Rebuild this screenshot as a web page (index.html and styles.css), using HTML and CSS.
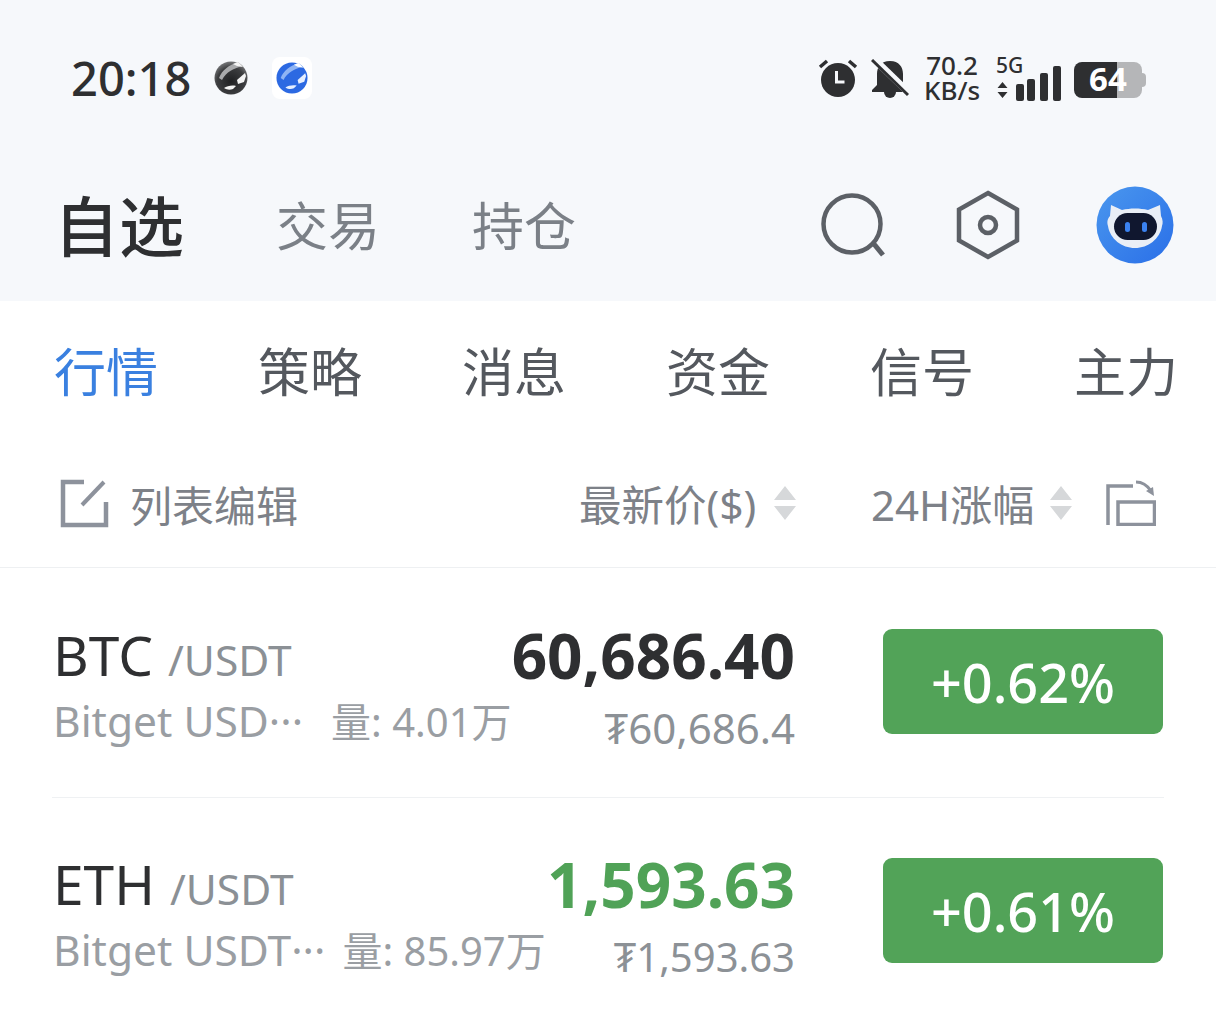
FILE: index.html
```html
<!DOCTYPE html>
<html lang="zh-CN">
<head>
<meta charset="utf-8">
<title>自选</title>
<link rel="stylesheet" href="styles.css">
</head>
<body>
<header class="top">
  <div class="status">
    <div class="status-left">
      <span class="clock">20:18</span>
      <svg class="app-dark" viewBox="0 0 34 34"><defs><radialGradient id="sphd" cx="0.5" cy="0.6" r="0.6"><stop offset="0" stop-color="#1f2022"/><stop offset="0.7" stop-color="#3c3d3f"/><stop offset="1" stop-color="#77787a"/></radialGradient></defs><circle cx="17" cy="17" r="16.500" fill="url(#sphd)"/><path d="M5 17C8 9 15 4 24 1l5 4C20 7 12 11 8 19z" fill="#a9aaac"/><path d="M19 3l5-2 5 5-6-1z" fill="#f4f4f4"/><path d="M10 27c3-2 8-3 12-2l-3 3c-3 1-6 1-9-1z" fill="#f4f4f4"/><path d="M23 19l8-7 1 3-2 6-6 2z" fill="#f4f4f4"/></svg>
      <span class="app-tile"><svg class="app-blue" viewBox="0 0 34 34"><circle cx="17" cy="17" r="16.500" fill="#2c69e2"/><path d="M5 17C8 9 15 4 24 1l5 4C20 7 12 11 8 19z" fill="#8fb4f4"/><path d="M19 3l5-2 5 5-6-1z" fill="#fff"/><path d="M10 27c3-2 8-3 12-2l-3 3c-3 1-6 1-9-1z" fill="#e6efff"/><path d="M23 19l8-7 1 3-2 6-6 2z" fill="#e6efff"/></svg></span>
    </div>
    <div class="status-right">
      <svg class="ic-alarm" viewBox="0 0 40 40"><circle cx="20" cy="22" r="17" fill="#2e2f31"/><path d="M18.500 13v11h8" stroke="#f6f8fb" stroke-width="3" fill="none"/><path d="M2 9l7-6M38 9l-7-6" stroke="#2e2f31" stroke-width="3.500"/></svg>
      <svg class="ic-bell" viewBox="0 0 38 40"><path d="M19 2c9 0 13 6 13 13v11l5 5v2H1v-2l5-5V15C6 8 10 2 19 2z" fill="#2e2f31"/><path d="M13 33a6 6 0 0 0 12 0z" fill="#2e2f31"/><path d="M2 -1l36 35" stroke="#f6f8fb" stroke-width="7"/><path d="M1 1l36 35" stroke="#2e2f31" stroke-width="3"/></svg>
      <div class="speed">70.2<br>KB/s</div>
      <div class="net">
        <span class="fiveg">5G</span>
        <svg class="ic-arrows" viewBox="0 0 12 18"><path d="M6 1l5 6H1zM6 17l5-6H1z" fill="#2e2f31"/></svg>
      </div>
      <svg class="ic-signal" viewBox="0 0 45 35"><rect x="0" y="18" width="8" height="17" rx="2"/><rect x="11" y="13" width="8" height="22" rx="2"/><rect x="24" y="7" width="8" height="28" rx="2"/><rect x="37" y="0" width="8" height="35" rx="2"/></svg>
      <div class="battery"><span class="battery-num">64</span><span class="battery-cap"></span></div>
    </div>
  </div>
  <nav class="mainnav">
    <span class="nav-active">自选</span>
    <span class="nav-item">交易</span>
    <span class="nav-item">持仓</span>
    <div class="nav-icons">
      <svg class="ic-search" viewBox="0 0 64 64"><circle cx="31" cy="31" r="28.500" fill="none" stroke="#5c6066" stroke-width="4.500"/><path d="M53 51l9 11" stroke="#5c6066" stroke-width="5" fill="none"/></svg>
      <svg class="ic-hex" viewBox="0 0 64 70"><path d="M32 3l29 16.500v31L32 67 3 50.500v-31z" fill="none" stroke="#5c6066" stroke-width="4.500"/><circle cx="32" cy="35" r="8" fill="none" stroke="#5c6066" stroke-width="4.500"/></svg>
      <svg class="ic-bot" viewBox="0 0 78 78"><defs><linearGradient id="botbg" x1="0" y1="0" x2="1" y2="1"><stop offset="0" stop-color="#4a97ee"/><stop offset="1" stop-color="#2a6fe8"/></linearGradient></defs><circle cx="39" cy="39" r="38.500" fill="url(#botbg)"/><path d="M15 19l11 5c8-2 18-2 26 0l12-5 1 11c2 4 2 7 1 10-2 13-14 22-27 22S14 53 12 40c-1-3-1-7 2-10z" fill="#e9eef6"/><rect x="18" y="27" width="43" height="27" rx="13.500" fill="#10172f"/><rect x="29" y="36" width="5" height="10" rx="2.500" fill="#3b82f0"/><rect x="46" y="36" width="5" height="10" rx="2.500" fill="#3b82f0"/></svg>
    </div>
  </nav>
</header>
<main class="panel">
  <div class="tabs">
    <span class="tab tab-active">行情</span>
    <span class="tab">策略</span>
    <span class="tab">消息</span>
    <span class="tab">资金</span>
    <span class="tab">信号</span>
    <span class="tab">主力</span>
  </div>
  <div class="listhead">
    <div class="edit">
      <svg class="ic-edit" viewBox="0 0 50 50"><path d="M24 4H3v43h43V24" fill="none" stroke="#8d929c" stroke-width="4.500"/><path d="M22 27L44 4" stroke="#8d929c" stroke-width="4"/></svg>
      <span>列表编辑</span>
    </div>
    <div class="sort sort-price">
      <span class="sort-label">最新价($)</span>
      <svg class="ic-sort" viewBox="0 0 24 34"><path d="M12 0l11 14H1zM12 34l11-14H1z" fill="#d6d8da"/></svg>
    </div>
    <div class="sort sort-change">
      <span class="sort-label">24H涨幅</span>
      <svg class="ic-sort" viewBox="0 0 24 34"><path d="M12 0l11 14H1zM12 34l11-14H1z" fill="#d6d8da"/></svg>
    </div>
    <svg class="ic-rotate" viewBox="0 0 50 46"><path d="M27 6H2v39" fill="none" stroke="#8d929c" stroke-width="3.500"/><rect x="12" y="22" width="36.500" height="22.500" fill="none" stroke="#8d929c" stroke-width="3.500"/><path d="M30 2c6 0 11 3 15 9" fill="none" stroke="#8d929c" stroke-width="3"/><path d="M40 11l7-4 1 9z" fill="#8d929c"/></svg>
  </div>
  <article class="coin">
    <div class="coin-main">
      <div class="pair"><span class="sym">BTC</span><span class="quote">/USDT</span></div>
      <div class="meta"><span class="meta-name">Bitget USD···</span><span class="meta-vol">量: 4.01万</span></div>
    </div>
    <div class="coin-price">
      <span class="price">60,686.40</span>
      <span class="fiat fiat-wide">₮60,686.4</span>
    </div>
    <div class="change">+0.62%</div>
  </article>
  <hr class="divider">
  <article class="coin">
    <div class="coin-main">
      <div class="pair"><span class="sym">ETH</span><span class="quote">/USDT</span></div>
      <div class="meta"><span class="meta-name meta-name-tight">Bitget USDT···</span><span class="meta-vol">量: 85.97万</span></div>
    </div>
    <div class="coin-price">
      <span class="price price-up">1,593.63</span>
      <span class="fiat">₮1,593.63</span>
    </div>
    <div class="change">+0.61%</div>
  </article>
</main>
</body>
</html>
```
FILE: styles.css
```css
* { box-sizing: border-box; }
html, body { margin: 0; padding: 0; }
body {
  width: 1216px;
  height: 1025px;
  overflow: hidden;
  background: #fff;
  font-family: "Noto Sans", "Noto Sans CJK SC", sans-serif;
  color: #2e2f31;
}
svg { display: block; flex: none; }

.top { height: 301px; background: #f6f8fb; padding-top: 50px; }
.status { height: 56px; display: flex; justify-content: space-between; align-items: center; padding: 0 70px 0 71px; }
.status-left { display: flex; align-items: center; }
.clock { font-size: 47px; font-weight: 500; line-height: 56px; width: 143px; }
.app-dark { width: 34px; height: 34px; }
.app-tile { margin-left: 24px; width: 40px; height: 42px; background: #fff; border-radius: 8px; display: flex; align-items: center; justify-content: center; }
.app-blue { width: 32px; height: 32px; }
.status-right { display: flex; align-items: center; }
.ic-alarm { width: 40px; height: 40px; }
.ic-bell { width: 38px; height: 40px; margin-left: 13px; margin-top: 2px; }
.speed { width: 58px; margin-left: 14px; font-size: 26px; font-weight: 500; line-height: 25px; text-align: center; }
.net { display: flex; flex-direction: column; align-items: flex-start; width: 20px; margin-left: 15px; gap: 8px; }
.fiveg { font-size: 21px; font-weight: 500; line-height: 16px; }
.ic-arrows { width: 13px; height: 18px; }
.ic-signal { width: 45px; height: 35px; fill: #2e2f31; margin-top: 10px; }
.battery { width: 68px; height: 36px; margin-left: 13px; margin-top: 4px; margin-right: 4px; display: flex; align-items: center; border-radius: 8px; background: linear-gradient(90deg, #2e2f31 0 63%, #b5b6b8 63%); position: relative; }
.battery-num { color: #fff; font-size: 33px; font-weight: 700; line-height: 34px; padding: 0 0 2px 15px; }
.battery-cap { position: absolute; right: -4px; top: 11px; width: 4px; height: 14px; border-radius: 0 4px 4px 0; background: #b5b6b8; }

.mainnav { display: flex; align-items: center; height: 195px; padding: 43px 42px 0 54px; }
.nav-active { font-size: 65px; font-weight: 500; line-height: 80px; color: #2e2f31; width: 222px; padding-top: 2px; }
.nav-item { font-size: 52px; line-height: 80px; color: #7b8087; width: 196px; padding-top: 2px; white-space: nowrap; }
.nav-icons { margin-left: auto; display: flex; align-items: center; }
.ic-search { width: 64px; height: 64px; margin-left: 1px; }
.ic-hex { width: 64px; height: 70px; margin-left: 71px; }
.ic-bot { width: 78px; height: 78px; margin-left: 76px; }

.tabs { display: flex; justify-content: space-between; height: 142px; padding: 39px 40px 0 54px; }
.tab { font-size: 52px; line-height: 64px; color: #54585e; width: 102px; white-space: nowrap; }
.tab-active { color: #3a80e0; }

.listhead { display: flex; align-items: center; height: 125px; padding: 0 58px 4px 60px; border-bottom: 1px solid #eef0f2; }
.edit { display: flex; align-items: center; gap: 20px; font-size: 42px; color: #7d8188; width: 519px; }
.ic-edit { width: 50px; height: 50px; }
.sort { display: flex; align-items: center; font-size: 42.500px; color: #7d8188; white-space: nowrap; }
.sort-label { padding-bottom: 2px; }
.sort-price { width: 292px; gap: 17px; }
.sort-change { width: 235px; gap: 15px; font-size: 42px; }
.ic-sort { width: 24px; height: 34px; }
.ic-rotate { width: 50px; height: 46px; }

.coin { display: flex; align-items: flex-start; height: 229px; padding: 53px 53px 0 53px; }
.coin-main { flex: none; width: 400px; }
.pair { display: flex; align-items: baseline; }
.sym { font-size: 55px; line-height: 68px; color: #2e2f31; }
.quote { font-size: 42.500px; color: #8b9095; margin-left: 15px; line-height: 68px; }
.meta { display: flex; align-items: baseline; line-height: 54px; color: #9a9ea3; white-space: nowrap; }
.meta-name { font-size: 42.500px; margin-right: 28px; }
.meta-name-tight { margin-right: 17px; }
.meta-vol { font-size: 40px; }
.coin-price { flex: 1; min-width: 0; display: flex; flex-direction: column; align-items: flex-end; }
.price { font-size: 62px; font-weight: 700; line-height: 68px; color: #2e2f31; }
.price-up { color: #50a257; }
.fiat { font-size: 40px; line-height: 68px; margin-top: 5px; color: #8c9196; }
.fiat-wide { font-size: 42px; }
.change { flex: none; width: 280px; height: 105px; margin-left: 88px; margin-top: 8px; background: #52a358; border-radius: 9px; color: #fff; font-size: 54px; font-weight: 500; display: flex; align-items: center; justify-content: center; }
.divider { height: 1px; border: 0; background: #eff1f3; margin: 0 52px -1px; }
```
